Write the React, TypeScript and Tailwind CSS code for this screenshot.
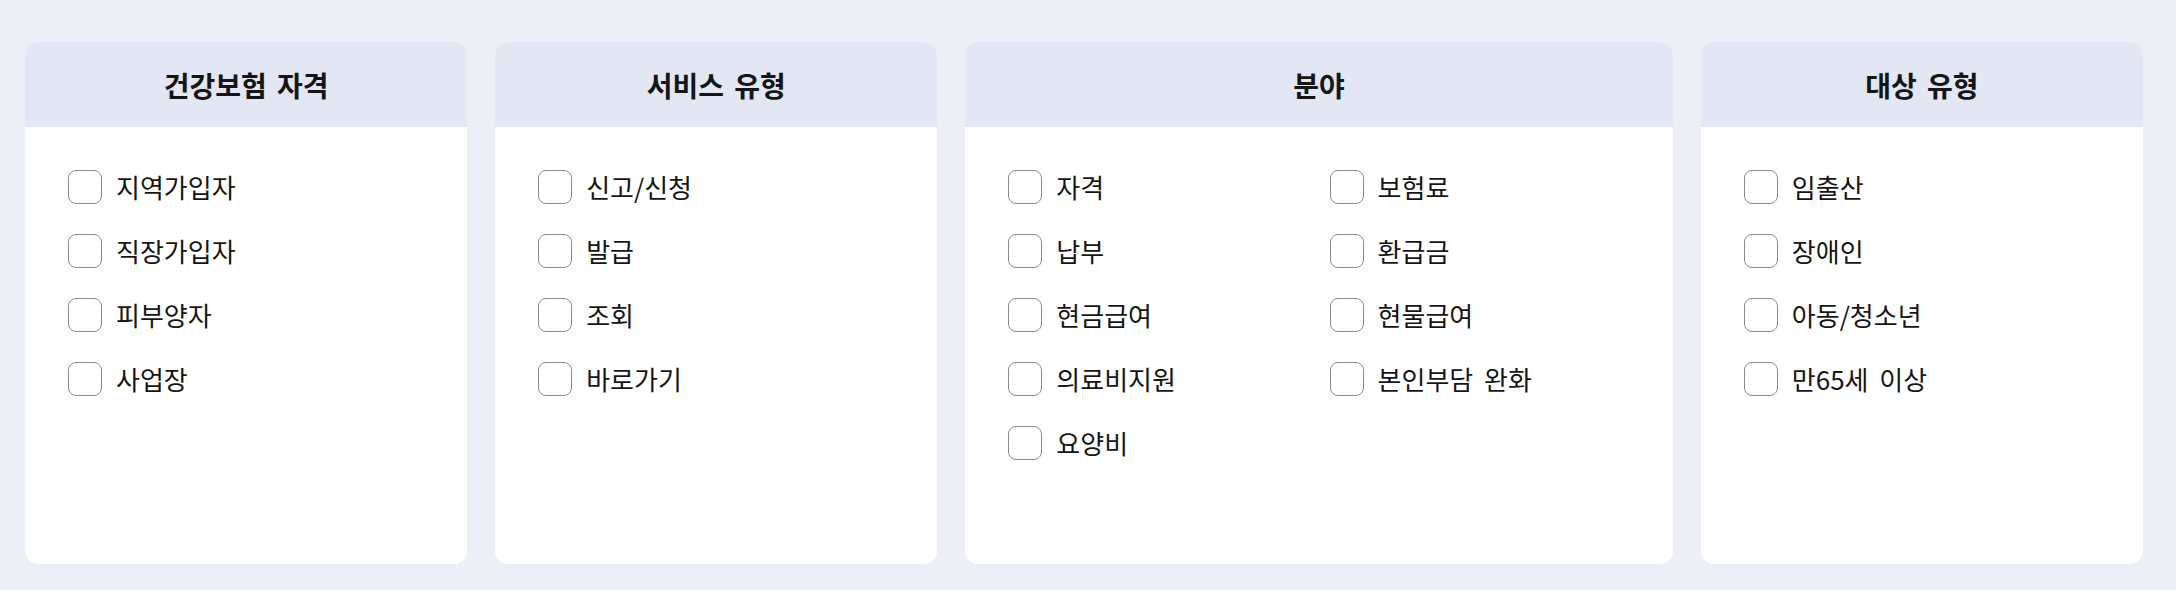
const groups: { title: string; items: string[]; cols?: boolean }[] = [
  { title: "건강보험 자격", items: ["지역가입자", "직장가입자", "피부양자", "사업장"] },
  { title: "서비스 유형", items: ["신고/신청", "발급", "조회", "바로가기"] },
  {
    title: "분야",
    items: ["자격", "보험료", "납부", "환급금", "현금급여", "현물급여", "의료비지원", "본인부담 완화", "요양비"],
    cols: true,
  },
  { title: "대상 유형", items: ["임출산", "장애인", "아동/청소년", "만65세 이상"] },
];

function Check({ label }: { label: string }) {
  return (
    <label className="flex items-center gap-[14px] h-[34px] cursor-pointer">
      <input
        type="checkbox"
        className="appearance-none shrink-0 w-[34px] h-[34px] rounded-[8px] border border-[#8b8b8b] bg-white"
      />
      <span className="text-[26px] leading-none text-[#151515] whitespace-nowrap [word-spacing:5px]">{label}</span>
    </label>
  );
}

export default function App() {
  return (
    <div
      className="min-h-screen bg-[#eceff5] pl-[25px] pr-[33px] pt-[42px] pb-[26px]"
      style={{ fontFamily: '"Noto Sans CJK KR", "Noto Sans", sans-serif' }}
    >
      <div className="grid grid-cols-[1fr_1fr_1.6fr_1fr] gap-[28px]">
        {groups.map((g) => (
          <section key={g.title} className="h-[522px] rounded-[13px] bg-white overflow-hidden flex flex-col">
            <h2 className="h-[85px] shrink-0 bg-[#e3e7f3] flex items-center justify-center text-[28px] font-bold text-[#151515] [word-spacing:4px]">
              {g.title}
            </h2>
            <div
              className={
                g.cols
                  ? "grid grid-cols-2 gap-x-[21px] gap-y-[30px] pt-[43px] px-[43px] content-start"
                  : "flex flex-col gap-[30px] pt-[43px] px-[43px]"
              }
            >
              {g.items.map((it) => (
                <Check key={it} label={it} />
              ))}
            </div>
          </section>
        ))}
      </div>
    </div>
  );
}
